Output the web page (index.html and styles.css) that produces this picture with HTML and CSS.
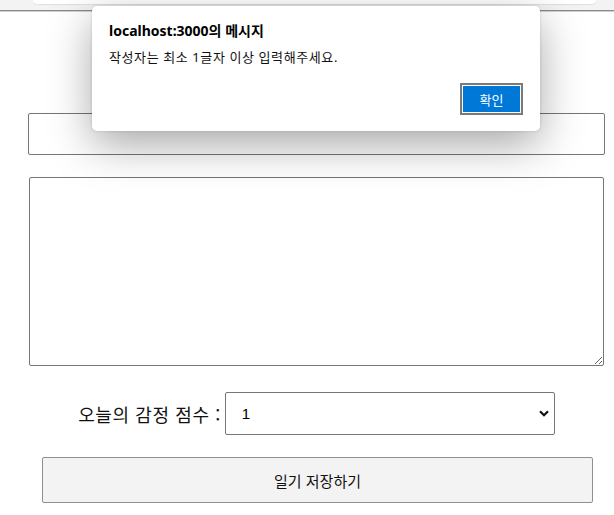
FILE: index.html
```html
<!DOCTYPE html>
<html lang="ko">
<head>
<meta charset="utf-8">
<title>감정 일기장</title>
<link rel="stylesheet" href="styles.css">
</head>
<body>
<div class="chrome"><div class="chrome-bar"></div></div>
<main class="page">
  <input class="author" type="text">
  <textarea class="content"></textarea>
  <div class="score-row">
    <span class="score-label">오늘의 감정 점수 :</span>
    <div class="select-wrap">
      <select class="score">
        <option>1</option><option>2</option><option>3</option><option>4</option><option>5</option>
      </select>
      <svg class="chevron" width="10" height="7" viewBox="0 0 10 7"><path d="M1 1.2 L5 5.2 L9 1.2" fill="none" stroke="#111" stroke-width="2.2"/></svg>
    </div>
  </div>
  <button class="save">일기 저장하기</button>
</main>
<div class="dialog">
  <div class="dialog-title">localhost:3000의 메시지</div>
  <div class="dialog-msg">작성자는 최소 1글자 이상 입력해주세요.</div>
  <div class="dialog-actions">
    <button class="ok">확인</button>
  </div>
</div>
</body>
</html>
```
FILE: styles.css
```css
html, body {
  margin: 0;
  padding: 0;
  background: #ffffff;
  font-family: "Noto Sans", "Noto Sans CJK KR", sans-serif;
  color: #000;
}
.chrome {
  height: 10px;
  background: #f3f3f3;
  border-bottom: 1px solid #8a8a8a;
  box-shadow: 0 1px 0 #d0d0d0;
}
.chrome-bar {
  margin-left: 33px;
  width: 563px;
  height: 4px;
  background: #ffffff;
  border-radius: 0 0 6px 6px;
  box-shadow: 0 1px 1px rgba(0,0,0,0.08);
}
.page {
  padding: 0 9px 20px 28px;
  display: flex;
  flex-direction: column;
}
.author {
  margin: 102px 0 0 0;
  width: 577px;
  height: 42px;
  box-sizing: border-box;
  border: 1px solid #767676;
  border-radius: 2px;
  padding: 0 8px;
}
.content {
  margin: 22px 0 0 1px;
  width: 575px;
  height: 189px;
  box-sizing: border-box;
  border: 1px solid #767676;
  border-radius: 2px;
  resize: both;
}
.score-row {
  margin-top: 26px;
  display: flex;
  justify-content: center;
  align-items: center;
  gap: 4px;
}
.score-label {
  font-family: "Noto Sans CJK KR", sans-serif;
  font-size: 18px;
  color: #111;
  letter-spacing: 0.6px;
}
.select-wrap {
  position: relative;
}
.score {
  appearance: none;
  -webkit-appearance: none;
  width: 330px;
  height: 43px;
  box-sizing: border-box;
  border: 1px solid #767676;
  border-radius: 2px;
  background: #fff;
  padding: 0 0 0 16px;
  font-family: "Liberation Sans", Arial, sans-serif;
  font-size: 15px;
  color: #000;
}
.chevron {
  position: absolute;
  right: 6px;
  top: 18px;
  pointer-events: none;
}
.save {
  margin: 22px 0 0 14px;
  width: 551px;
  height: 46px;
  box-sizing: border-box;
  border: 1px solid #8f8f8f;
  border-radius: 2px;
  background: #f3f3f3;
  font-family: "Noto Sans CJK KR", sans-serif;
  font-size: 15px;
  color: #111;
}
.dialog {
  position: absolute;
  left: 92px;
  top: 6px;
  width: 448px;
  height: 125px;
  box-sizing: border-box;
  background: #fff;
  border-radius: 5px;
  box-shadow: 0 14px 44px rgba(0,0,0,0.34), 0 0 3px rgba(0,0,0,0.15);
  padding: 14px 17px 0 17px;
}
.dialog-title {
  font-family: "Noto Sans", "Noto Sans CJK KR", sans-serif;
  font-weight: 700;
  font-size: 14px;
  line-height: 22px;
  color: #000;
}
.dialog-msg {
  margin-top: 5px;
  font-family: "Noto Sans", "Noto Sans CJK KR", sans-serif;
  font-size: 13px;
  line-height: 21px;
  letter-spacing: 0.6px;
  color: #111;
}
.dialog-actions {
  margin-top: 15px;
  display: flex;
  justify-content: flex-end;
  padding-right: 0;
}
.ok {
  width: 63px;
  height: 32px;
  box-sizing: border-box;
  background: #0078d7;
  border: 2px solid #7a7a7a;
  box-shadow: inset 0 0 0 1px #ffffff;
  color: #fff;
  font-family: "Noto Sans CJK KR", sans-serif;
  font-size: 13px;
  padding: 0;
}
```
